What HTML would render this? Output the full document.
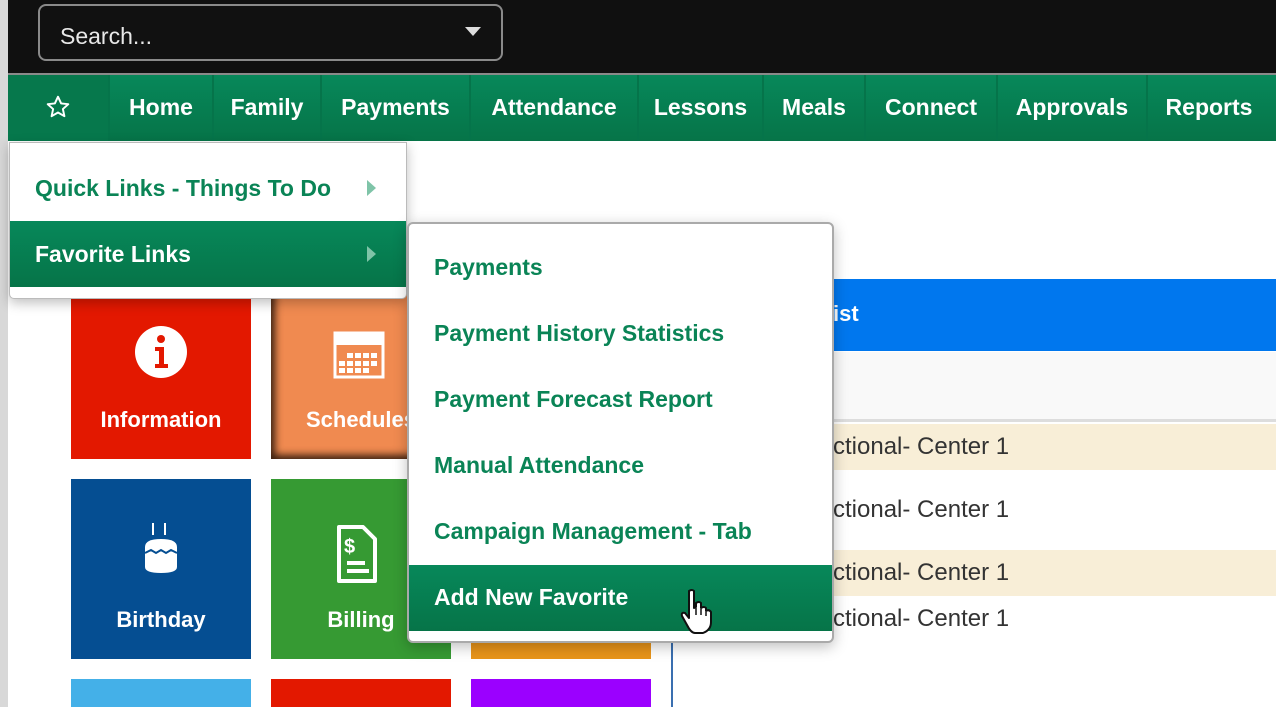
<!DOCTYPE html>
<html style="width:1276px;height:707px;overflow:hidden"><head><style>
*{margin:0;padding:0;box-sizing:border-box}
body{width:1276px;height:707px;overflow:hidden;background:#fff;font-family:"Liberation Sans",sans-serif;position:relative}
.a{position:absolute}
.nav{left:8px;top:75px;width:1268px;height:66px;background:linear-gradient(#07885a,#067448);}
.ni{position:absolute;top:0;height:66px;line-height:64px;color:#fff;font-weight:bold;font-size:23px;text-align:center;border-left:2px solid #05744a}
.tile{position:absolute;width:180px;height:180px;color:#fff;font-weight:bold;font-size:22px;text-align:center}
.tile span{position:absolute;left:0;right:0;top:128px}
.si{position:absolute;left:25px;font-size:23px;font-weight:bold;color:#0a8456}
.row{position:absolute;left:672px;width:604px;height:46px;font-size:24px;color:#333;line-height:46px;padding-left:161px}
</style></head><body>
<div class="a" style="left:0;top:0;width:8px;height:707px;background:#d8d8d8"></div>
<div class="a" style="left:8px;top:0;width:1268px;height:73px;background:#101010"></div>
<div class="a" style="left:8px;top:73px;width:1268px;height:2px;background:#8a8a8a"></div>
<div class="a" style="left:38px;top:4px;width:465px;height:57px;border:2px solid #8a8a8a;border-radius:8px;background:#111;color:#e8e8e8;font-size:23px;line-height:60px;padding-left:20px">Search...</div>
<div class="a" style="left:465px;top:27px;width:0;height:0;border-left:8px solid transparent;border-right:8px solid transparent;border-top:9px solid #ddd"></div>
<div class="a nav">
<div class="ni" style="left:0;width:100px;border:none;background:#06784c"><svg width="26" height="26" viewBox="0 0 24 24" style="margin-top:19px"><path d="M12 2.5l2.9 6.2 6.6.7-5 4.5 1.4 6.6L12 17.1 6.1 20.5l1.4-6.6-5-4.5 6.6-.7z" fill="none" stroke="#fff" stroke-width="1.8" stroke-linejoin="round"/></svg></div>
<div class="ni" style="left:100px;width:104px">Home</div>
<div class="ni" style="left:204px;width:108px">Family</div>
<div class="ni" style="left:312px;width:149px">Payments</div>
<div class="ni" style="left:461px;width:168px">Attendance</div>
<div class="ni" style="left:629px;width:125px">Lessons</div>
<div class="ni" style="left:754px;width:102px">Meals</div>
<div class="ni" style="left:856px;width:132px">Connect</div>
<div class="ni" style="left:988px;width:150px">Approvals</div>
<div class="ni" style="left:1138px;width:124px">Reports</div>
</div>
<!-- tiles -->
<div class="tile" style="left:71px;top:279px;background:#e31800"><svg class="a" style="left:63px;top:46px" width="54" height="54" viewBox="0 0 54 54"><circle cx="27" cy="27" r="26" fill="#fff"/><circle cx="27" cy="14" r="4" fill="#e31800"/><path d="M21 22h9v17h4v4H21v-4h4V26h-4z" fill="#e31800"/></svg><span>Information</span></div>
<div class="tile" style="left:271px;top:279px;background:#f08a50;box-shadow:inset 0 0 8px 4px #3a2010"><svg class="a" style="left:62px;top:52px" width="56" height="50"><rect x="2" y="2" width="48" height="44" fill="none" stroke="#fff" stroke-width="3"/><rect x="2" y="2" width="48" height="12" fill="#fff"/><g fill="#fff"><rect x="6" y="30" width="6" height="5"/><rect x="14" y="22" width="6" height="5"/><rect x="22" y="22" width="6" height="5"/><rect x="30" y="22" width="6" height="5"/><rect x="38" y="22" width="6" height="5"/><rect x="14" y="30" width="6" height="5"/><rect x="22" y="30" width="6" height="5"/><rect x="30" y="30" width="6" height="5"/><rect x="38" y="30" width="6" height="5"/><rect x="6" y="37" width="6" height="5"/><rect x="14" y="37" width="6" height="5"/><rect x="22" y="37" width="6" height="5"/><rect x="30" y="37" width="6" height="5"/></g></svg><span>Schedules</span></div>
<div class="tile" style="left:471px;top:279px;background:#f08a50"></div>
<div class="tile" style="left:71px;top:479px;background:#054e92"><svg class="a" style="left:70px;top:42px" width="40" height="56" viewBox="0 0 40 56"><path d="M12 2v12M24 2v12" stroke="#fff" stroke-width="2"/><path d="M4 26q0-8 16-8t16 8v20q0 6-16 6T4 46z" fill="#fff"/><path d="M4 32l6-3 5 3 5-3 5 3 5-3 6 3" stroke="#054e92" stroke-width="2" fill="none"/></svg><span>Birthday</span></div>
<div class="tile" style="left:271px;top:479px;background:#369a33"><svg class="a" style="left:62px;top:44px" width="48" height="64" viewBox="0 0 48 64"><path d="M6 4h24l12 12v42H6z" fill="none" stroke="#fff" stroke-width="4" stroke-linejoin="round"/><text x="11" y="30" fill="#fff" font-size="20" font-family="Liberation Sans">$</text><path d="M14 40h18M14 48h22" stroke="#fff" stroke-width="4"/></svg><span>Billing</span></div>
<div class="tile" style="left:471px;top:479px;background:#e8941a"></div>
<div class="tile" style="left:71px;top:679px;height:28px;background:#44b0e8"></div>
<div class="tile" style="left:271px;top:679px;height:28px;background:#e31800"></div>
<div class="tile" style="left:471px;top:679px;height:28px;background:#9b00ff"></div>
<div class="a" style="left:671px;top:300px;width:2px;height:407px;background:#3a6fb0"></div>
<!-- right table -->
<div class="a" style="left:672px;top:279px;width:604px;height:72px;background:#0077ee;color:#fff;font-weight:bold;font-size:22px;line-height:70px;padding-left:161px">ist</div>
<div class="a" style="left:672px;top:352px;width:604px;height:70px;background:#f9f9f9;border-bottom:3px solid #ddd"></div>
<div class="row" style="top:424px;background:#f8eed7">ctional- Center 1</div>
<div class="row" style="top:487px">ctional- Center 1</div>
<div class="row" style="top:550px;background:#f8eed7">ctional- Center 1</div>
<div class="row" style="top:596px">ctional- Center 1</div>
<!-- main dropdown -->
<div class="a" style="left:9px;top:142px;width:398px;height:157px;background:#fff;border:1px solid #bbb;border-radius:0 0 5px 5px;box-shadow:0 4px 12px rgba(0,0,0,.25)">
<div class="a" style="left:0;top:12px;width:396px;height:66px;line-height:66px;padding-left:25px;color:#0a8456;font-weight:bold;font-size:23px">Quick Links - Things To Do</div>
<div class="a" style="left:357px;top:37px;border-top:8px solid transparent;border-bottom:8px solid transparent;border-left:9px solid #7fc4a8"></div>
<div class="a" style="left:0;top:78px;width:396px;height:66px;line-height:66px;padding-left:25px;color:#fff;font-weight:bold;font-size:23px;background:linear-gradient(#07885a,#067448)">Favorite Links</div>
<div class="a" style="left:357px;top:103px;border-top:8px solid transparent;border-bottom:8px solid transparent;border-left:9px solid #7fc4a8"></div>
</div>
<!-- submenu -->
<div class="a" style="left:407px;top:222px;width:427px;height:421px;background:#fff;border:2px solid #aaa;border-radius:6px;box-shadow:0 4px 14px rgba(0,0,0,.25)">
<div class="si" style="top:30px">Payments</div>
<div class="si" style="top:96px">Payment History Statistics</div>
<div class="si" style="top:162px">Payment Forecast Report</div>
<div class="si" style="top:228px">Manual Attendance</div>
<div class="si" style="top:294px">Campaign Management - Tab</div>
<div class="a" style="left:0;top:341px;width:423px;height:66px;background:linear-gradient(#07885a,#067448)"></div>
<div class="si" style="top:360px;color:#fff">Add New Favorite</div>
<svg class="a" style="left:270px;top:364px" width="34" height="46" viewBox="0 0 34 46"><path d="M10 3q3-2 5 0v17l2-1v-4q3-2 5 0v5q3-2 5 0v3q3-2 5 1v10q0 8-8 11h-8q-4 0-8-8L3 28q-1-4 3-3l4 5z" fill="#fff" stroke="#111" stroke-width="2" stroke-linejoin="round"/><path d="M17 20v7M22 21v6M27 24v4" stroke="#111" stroke-width="1.5"/></svg>
</div>
</body></html>
